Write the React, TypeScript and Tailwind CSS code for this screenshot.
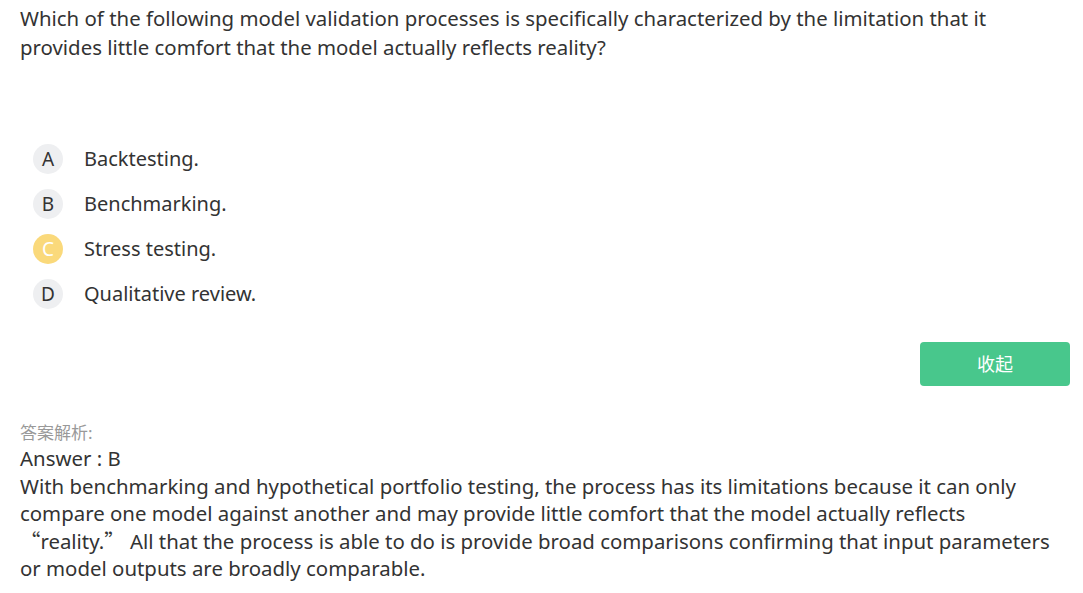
const options = [
  { key: "A", text: "Backtesting.", picked: false },
  { key: "B", text: "Benchmarking.", picked: false },
  { key: "C", text: "Stress testing.", picked: true },
  { key: "D", text: "Qualitative review.", picked: false },
];

export default function App() {
  return (
    <div
      className="min-h-[593px] bg-white text-[#333] pl-5 pt-[4px]"
      style={{ fontFamily: '"Noto Sans", "Noto Sans CJK SC", sans-serif' }}
    >
      <div className="w-[1050px]">
        {/* question */}
        <p className="text-[20.4px] leading-[29px]">
          Which of the following model validation processes is specifically characterized by the limitation that it
          provides little comfort that the model actually reflects reality?
        </p>

        {/* options */}
        <ul className="mt-[82px] flex flex-col gap-[15px] pl-[13px]">
          {options.map((o) => (
            <li key={o.key} className="flex items-center h-[30px]">
              <span
                className={
                  o.picked
                    ? "w-[30px] h-[30px] rounded-full bg-[#fad97b] text-white flex items-center justify-center text-[19px]"
                    : "w-[30px] h-[30px] rounded-full bg-[#eeeff1] text-[#333] flex items-center justify-center text-[19px]"
                }
              >
                {o.key}
              </span>
              <span className="ml-[21px] text-[20px]">{o.text}</span>
            </li>
          ))}
        </ul>

        <div className="flex justify-end mt-[33px]">
          <button className="w-[150px] h-[44px] rounded-[4px] bg-[#48c78c] text-white text-[18px]">收起</button>
        </div>

        {/* analysis */}
        <div className="mt-[34px]">
          <div className="text-[17px] leading-[26px] text-[#999]">答案解析:</div>
          <div className="text-[20.4px] leading-[24px] mb-[3px]">Answer : B</div>
          <p className="text-[20.4px] leading-[27px]">
            With benchmarking and hypothetical portfolio testing, the process has its limitations because it can only
            compare one model against another and may provide little comfort that the model actually reflects{" "}
            <span style={{ fontFamily: '"Noto Sans CJK SC", sans-serif' }}>“</span>reality.
            <span style={{ fontFamily: '"Noto Sans CJK SC", sans-serif' }}>”</span> All that the process is able to do
            is provide broad comparisons confirming that input parameters or model outputs are broadly comparable.
          </p>
        </div>
      </div>
    </div>
  );
}
